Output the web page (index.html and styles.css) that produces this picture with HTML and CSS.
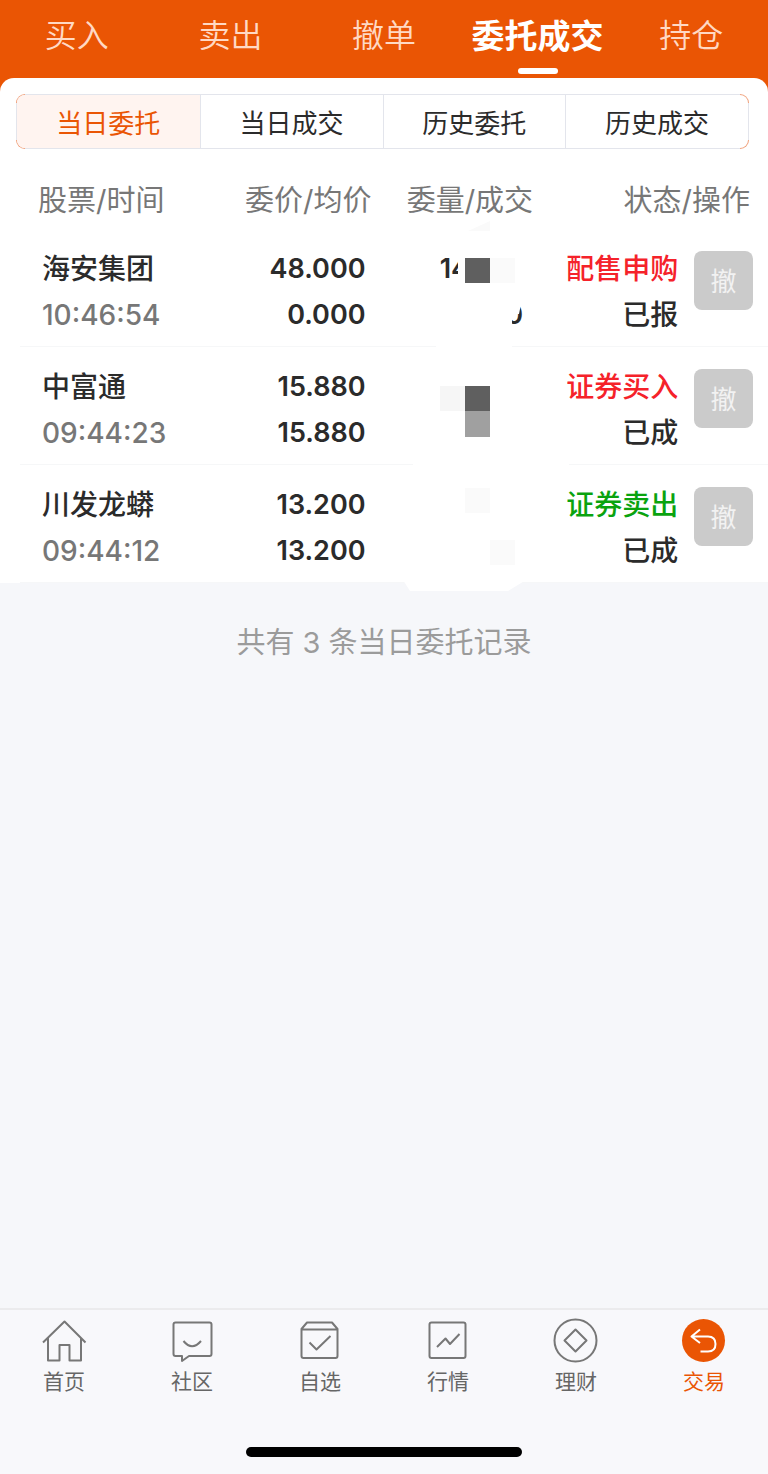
FILE: index.html
```
<!DOCTYPE html>
<html lang="zh-CN">
<head>
    <meta charset="UTF-8">
    <meta name="viewport" content="width=device-width, initial-scale=1">
    <title>委托成交</title>
    <link rel="stylesheet" href="styles.css">
</head>
<body>
    <nav class="top-nav">
        <a href="#">买入</a>
        <a href="#">卖出</a>
        <a href="#">撤单</a>
        <a href="#" class="active">委托成交</a>
        <a href="#">持仓</a>
    </nav>
    <main class="card">
        <div class="segment">
            <div class="segment-inner">
                <button class="selected">当日委托</button>
                <button>当日成交</button>
                <button>历史委托</button>
                <button>历史成交</button>
            </div>
        </div>
        <table class="orders">
            <colgroup>
                <col class="col-name">
                <col class="col-price">
                <col class="col-qty">
                <col class="col-status">
                <col class="col-action">
            </colgroup>
            <thead>
                <tr>
                    <th class="name">股票/时间</th>
                    <th>委价/均价</th>
                    <th class="qty">委量/成交</th>
                    <th class="status" colspan="2">状态/操作</th>
                </tr>
            </thead>
            <tbody>
                <tr>
                    <td class="name">海安集团<div class="time">10:46:54</div></td>
                    <td class="price">48.000<div>0.000</div></td>
                    <td class="qty">
                        <div class="qty-order">14</div>
                        <div>0</div>
                        <!-- mosaic over the quantities -->
                        <svg class="mosaic" width="200" height="364" viewBox="0 0 200 364" aria-hidden="true">
                            <path fill="#fff" d="M86 14H159V75L149 76L147 86H140V140H64V75H86Z"/>
                            <path fill="#fff" d="M41 228H197V246H41ZM31 352L38 363H136L154 352Z"/>
                            <path fill="#fafafa" d="M96 3L118 -7V3ZM118 30h25v25h-25ZM93 260h25v25h-25ZM118 312h25v25h-25Z"/>
                            <path fill="#f6f6f6" d="M68 158h25v25h-25Z"/>
                            <path fill="#5f5f5f" d="M93 30h25v25h-25ZM93 158h25v25h-25Z"/>
                            <path fill="#a0a0a0" d="M93 183h25v26h-25Z"/>
                        </svg>
                    </td>
                    <td class="status"><span class="buy">配售申购</span><div>已报</div></td>
                    <td class="action"><button class="cancel">撤</button></td>
                </tr>
                <tr>
                    <td class="name">中富通<div class="time">09:44:23</div></td>
                    <td class="price">15.880<div>15.880</div></td>
                    <td class="qty"></td>
                    <td class="status"><span class="buy">证券买入</span><div>已成</div></td>
                    <td class="action"><button class="cancel">撤</button></td>
                </tr>
                <tr>
                    <td class="name">川发龙蟒<div class="time">09:44:12</div></td>
                    <td class="price">13.200<div>13.200</div></td>
                    <td class="qty"></td>
                    <td class="status"><span class="sell">证券卖出</span><div>已成</div></td>
                    <td class="action"><button class="cancel">撤</button></td>
                </tr>
            </tbody>
        </table>
    </main>
    <p class="summary">共有 3 条当日委托记录</p>
    <footer class="tab-bar">
        <nav class="tabs">
            <a href="#">
                <svg class="icon" viewBox="0 0 48 48"><path d="M3 25.500L24.500 4.500L45.500 25.500M8 21V43.500H19.500V28H29.500V43.500H41V21"/></svg>
                首页
            </a>
            <a href="#">
                <svg class="icon" viewBox="0 0 48 48"><path d="M7.500 5.500H41.500Q43.500 5.500 43.500 7.500V37Q43.500 39 41.500 39H21L14 44V39H7.500Q5.500 39 5.500 37V7.500Q5.500 5.500 7.500 5.500ZM15.500 24Q24 34.500 33 24"/></svg>
                社区
            </a>
            <a href="#">
                <svg class="icon" viewBox="0 0 48 48"><path d="M11 5.500H36L41.500 12V39Q41.500 41 39.500 41H7.500Q5.500 41 5.500 39V12ZM5.500 12.500H41.500M13.500 25.500L20.500 32.500L34.500 19"/></svg>
                自选
            </a>
            <a href="#">
                <svg class="icon" viewBox="0 0 48 48"><rect x="5.500" y="5.500" width="36" height="35.500" rx="2"/><path d="M13 30L21.500 21.500L26 27L35.500 17"/></svg>
                行情
            </a>
            <a href="#">
                <svg class="icon" viewBox="0 0 48 48"><circle cx="23.500" cy="23.500" r="21"/><path d="M23.500 12.500L34.500 23.500L23.500 34.500L12.500 23.500Z"/></svg>
                理财
            </a>
            <a href="#" class="active">
                <svg class="icon" viewBox="0 0 48 48"><circle class="disc" cx="23.500" cy="23.500" r="21.500"/><path class="arrow" d="M20 12.500L11.500 19.500L20 26M11.500 19.500H28Q35.500 19.500 35.500 27T28 34.500H20.500"/></svg>
                交易
            </a>
        </nav>
        <div class="home-indicator"></div>
    </footer>
</body>
</html>
```

FILE: styles.css
```
* {
    box-sizing: border-box;
}
body {
    margin: 0;
    min-height: 100vh;
    display: flex;
    flex-direction: column;
    background: #f6f7fa;
    color: #2b2b2b;
    font-family: Inter, "Noto Sans CJK SC", sans-serif;
}
a {
    color: inherit;
    text-decoration: none;
}
button {
    margin: 0;
    padding: 0;
    border: none;
    background: none;
    color: inherit;
    font: inherit;
    cursor: pointer;
}
.top-nav {
    display: grid;
    grid-template-columns: repeat(5, 1fr);
    height: 92px;
    padding-top: 4px;
    background: #ea5504;
    color: #ffd9c4;
    font-size: 32px;
    line-height: 64px;
    text-align: center;
}
.top-nav a {
    font-weight: 350;
}
.top-nav .active {
    color: #fff;
    font-size: 33px;
    font-weight: 700;
}
.top-nav .active::after {
    content: "";
    display: block;
    width: 40px;
    height: 6px;
    margin: 0 auto;
    border-radius: 3px;
    background: #fff;
}
.card {
    margin-top: -14px;
    padding-top: 16px;
    border-radius: 14px 14px 0 0;
    background: #fff;
}
/* grey outline with orange corners */
.segment {
    margin: 0 19px 0 16px;
    padding: 1px;
    border-radius: 9px;
    background:
        linear-gradient(#e3e5ec, #e3e5ec) center / calc(100% - 18px) 100% no-repeat,
        linear-gradient(#e3e5ec, #e3e5ec) center / 100% calc(100% - 18px) no-repeat,
        #f0a07a;
}
.segment-inner {
    display: grid;
    grid-template-columns: repeat(4, 1fr);
    border-radius: 8px;
    overflow: hidden;
    background: #fff;
}
.segment button {
    height: 53px;
    font-size: 26px;
    border-left: 1px solid #e3e5ec;
}
.segment .selected {
    border-left: none;
    background: #fff4f0;
    color: #ea5504;
}
.orders {
    width: calc(100% - 20px);
    margin-left: 20px;
    border-collapse: collapse;
    table-layout: fixed;
    font-size: 28px;
    line-height: 46px;
    text-align: right;
    white-space: nowrap;
}
.col-name {
    width: 30%;
}
.col-price {
    width: 17%;
}
.col-qty {
    width: 22%;
}
.col-status {
    width: 21%;
}
.col-action {
    width: 10%;
}
.orders th {
    height: 79px;
    padding: 24px 0 0;
    color: #777;
    font-size: 29px;
    font-weight: 400;
}
.orders th.name {
    padding-left: 18px;
    text-align: left;
}
.orders th.qty {
    padding-right: 3px;
}
.orders th.status {
    padding-right: 18px;
}
.orders td {
    height: 118px;
    padding: 10px 0 0;
    border-bottom: 1px solid #f6f7f8;
    font-weight: 500;
}
.orders td.name {
    padding-left: 22px;
    text-align: left;
}
.orders .time {
    color: #777;
}
.orders td.price {
    padding-right: 6px;
    font-size: 27px;
    font-weight: 600;
}
.orders td.qty {
    position: relative;
    padding-right: 13px;
    font-size: 27px;
    font-weight: 600;
}
.qty-order {
    padding-right: 54px;
}
.mosaic {
    position: absolute;
    top: 0;
    left: 0;
    overflow: visible;
}
.orders td.status {
    padding-right: 15px;
}
.buy {
    color: #f5222a;
}
.sell {
    color: #0aa30f;
}
.orders td.action {
    padding: 0 15px 13px 0;
}
.cancel {
    width: 59px;
    height: 59px;
    padding-top: 3px;
    border-radius: 8px;
    background: #cbcbcb;
    color: #f2f2f2;
    font-size: 26px;
    font-weight: 400;
    vertical-align: middle;
}
.summary {
    margin: 40px 0;
    color: #9b9b9b;
    font-size: 29px;
    line-height: 40px;
    text-align: center;
}
.tab-bar {
    margin-top: auto;
    padding: 7px 0 17px;
    border-top: 2px solid #ebebed;
    background: #f8f8fb;
}
.tabs {
    display: grid;
    grid-template-columns: repeat(6, 1fr);
    color: #666;
    font-size: 21px;
    line-height: 34px;
}
.tabs a {
    display: flex;
    flex-direction: column;
    align-items: center;
}
.tabs .active {
    color: #ea5504;
}
.icon {
    width: 48px;
    height: 48px;
    fill: none;
    stroke: #777;
    stroke-width: 2;
    stroke-linejoin: round;
}
.icon .disc {
    fill: #ea5504;
    stroke: none;
}
.icon .arrow {
    stroke: #fff;
}
.home-indicator {
    width: 36%;
    height: 10px;
    margin: 48px auto 0;
    border-radius: 5px;
    background: #000;
}
```
